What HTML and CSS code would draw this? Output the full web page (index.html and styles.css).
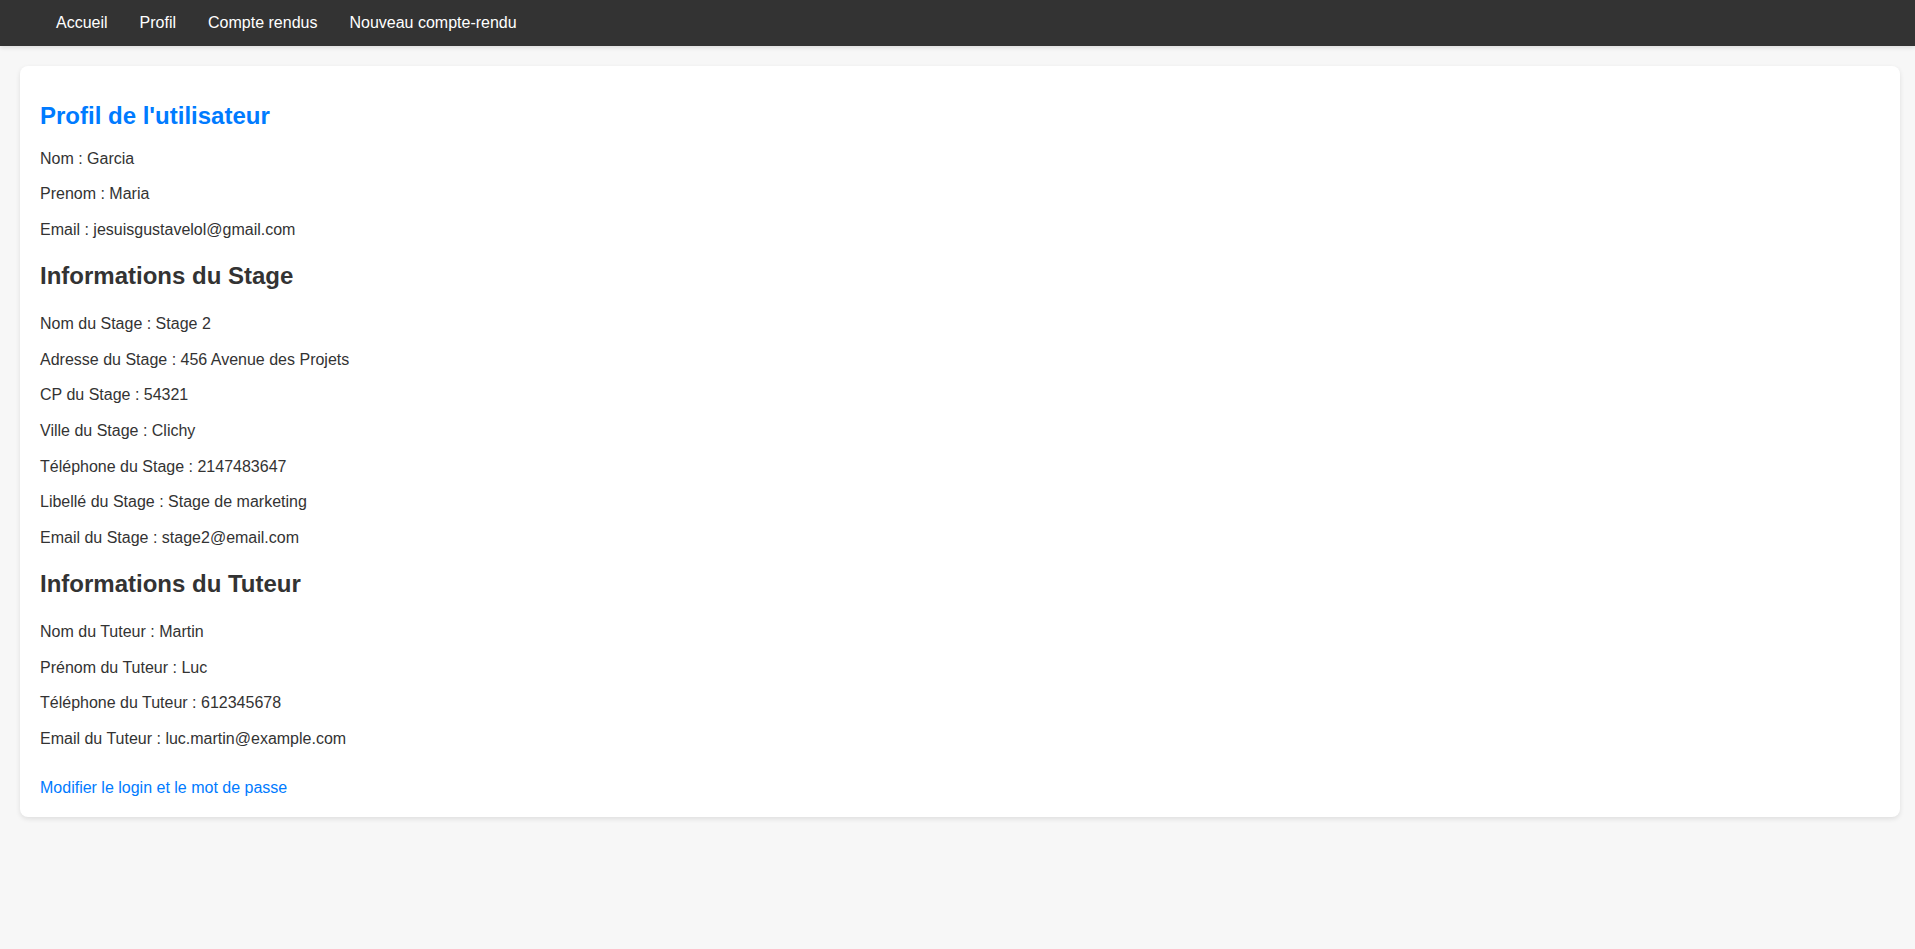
FILE: index.html
```html
<!DOCTYPE html>
<html lang="fr">
<head>
<meta charset="utf-8">
<title>Profil</title>
<link rel="stylesheet" href="styles.css">
</head>
<body>
<nav class="topnav">
  <a href="#" class="nav-link">Accueil</a>
  <a href="#" class="nav-link">Profil</a>
  <a href="#" class="nav-link">Compte rendus</a>
  <a href="#" class="nav-link">Nouveau compte-rendu</a>
</nav>
<main class="card">
  <h1 class="title">Profil de l'utilisateur</h1>
  <p class="field">Nom : Garcia</p>
  <p class="field">Prenom : Maria</p>
  <p class="field">Email : jesuisgustavelol@gmail.com</p>

  <h2 class="section">Informations du Stage</h2>
  <p class="field">Nom du Stage : Stage 2</p>
  <p class="field">Adresse du Stage : 456 Avenue des Projets</p>
  <p class="field">CP du Stage : 54321</p>
  <p class="field">Ville du Stage : Clichy</p>
  <p class="field">Téléphone du Stage : 2147483647</p>
  <p class="field">Libellé du Stage : Stage de marketing</p>
  <p class="field">Email du Stage : stage2@email.com</p>

  <h2 class="section">Informations du Tuteur</h2>
  <p class="field">Nom du Tuteur : Martin</p>
  <p class="field">Prénom du Tuteur : Luc</p>
  <p class="field">Téléphone du Tuteur : 612345678</p>
  <p class="field">Email du Tuteur : luc.martin@example.com</p>

  <a href="#" class="edit-link">Modifier le login et le mot de passe</a>
</main>
</body>
</html>
```
FILE: styles.css
```css
html, body {
  margin: 0;
  padding: 0;
}

body {
  background: #f7f7f7;
  font-family: "Liberation Sans", Arial, sans-serif;
  color: #333;
  line-height: 1.6;
}

.topnav {
  display: flex;
  align-items: center;
  height: 46px;
  padding-left: 40px;
  background: #333;
  box-shadow: 0 2px 4px rgba(0, 0, 0, 0.1);
}

.nav-link {
  color: #fff;
  text-decoration: none;
  font-size: 16px;
  line-height: 1.15;
  padding: 0 16px;
}

.card {
  display: block;
  margin: 20px 15px 20px 20px;
  padding: 20px;
  background: #fff;
  border-radius: 8px;
  box-shadow: 0 2px 5px rgba(0, 0, 0, 0.1);
}

.title {
  font-size: 24px;
  line-height: 1.15;
  color: #007bff;
  margin: 16px 0;
}

.section {
  font-size: 24px;
  line-height: 1.2;
  color: #333;
  margin: 20px 0;
}

.field {
  font-size: 16px;
  margin: 10px 0;
}

.edit-link {
  display: block;
  margin-top: 27px;
  font-size: 16px;
  line-height: 18px;
  color: #007bff;
  text-decoration: none;
}
```
